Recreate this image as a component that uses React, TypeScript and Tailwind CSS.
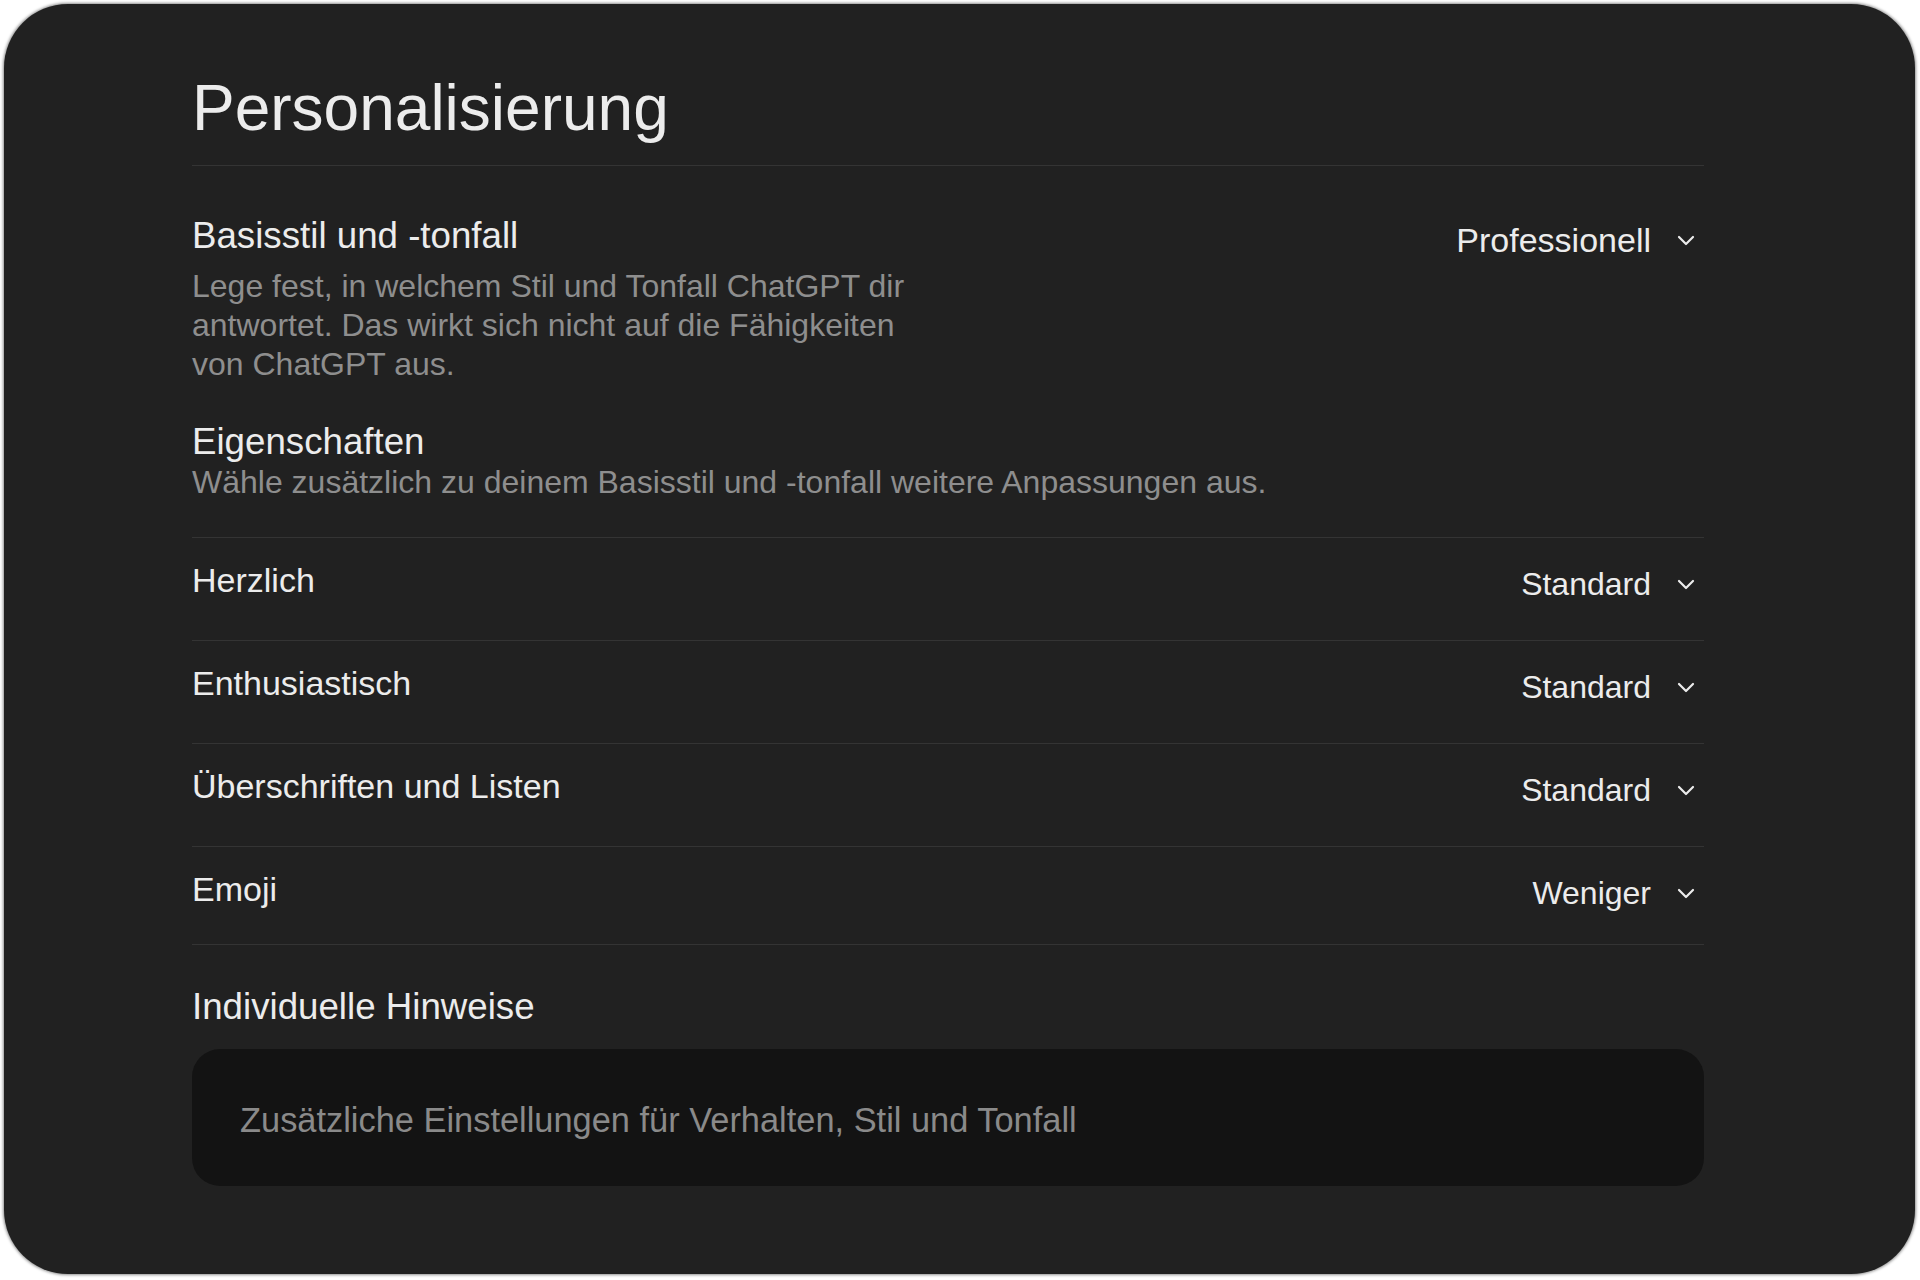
import React from "react";

type Option = { label: string; value: string };

const traits: Option[] = [
  { label: "Herzlich", value: "Standard" },
  { label: "Enthusiastisch", value: "Standard" },
  { label: "Überschriften und Listen", value: "Standard" },
  { label: "Emoji", value: "Weniger" },
];

function Chevron() {
  return (
    <svg width="18" height="11" viewBox="0 0 18 11" fill="none" className="shrink-0">
      <path d="M2 2 L9 9 L16 2" stroke="#ececec" strokeWidth="2.2" strokeLinecap="round" strokeLinejoin="round" />
    </svg>
  );
}

function Dropdown({ value, big }: { value: string; big?: boolean }) {
  return (
    <button
      type="button"
      className={`flex items-center h-[44px] pr-[9px] text-[#ececec] ${big ? "text-[34px]" : "text-[32px]"}`}
    >
      <span>{value}</span>
      <span className="ml-[26px] flex items-center">
        <Chevron />
      </span>
    </button>
  );
}

export default function App() {
  return (
    <div
      className="w-[1920px] h-[1280px] bg-white pt-[4px] pl-[4px] pr-[5px] pb-[6px]"
      style={{ fontFamily: '"Liberation Sans", Arial, Helvetica, sans-serif' }}
    >
      <div className="h-full w-full rounded-[64px] bg-[#212121] shadow-[0_0_3px_1px_rgba(0,0,0,0.45)] pl-[188px] pt-[66px]">
        <div className="w-[1512px] flex flex-col">
          <h1 className="text-[64px] leading-[77px] text-[#ececec] pb-[18px] border-b border-[#343434]">
            Personalisierung
          </h1>

          {/* Basisstil */}
          <div className="flex items-start justify-between mt-[48px]">
            <div className="flex flex-col">
              <h2 className="text-[36.7px] leading-[44px] text-[#ececec]">Basisstil und -tonfall</h2>
              <p className="max-w-[740px] mt-[9px] text-[32px] leading-[39px] text-[#8e8e8e]">
                Lege fest, in welchem Stil und Tonfall ChatGPT dir antwortet. Das wirkt sich nicht auf die
                Fähigkeiten von ChatGPT aus.
              </p>
            </div>
            <div className="mt-[4px]">
              <Dropdown value="Professionell" big />
            </div>
          </div>

          {/* Eigenschaften */}
          <div className="flex flex-col mt-[37px] pb-[35px]">
            <h2 className="text-[36.7px] leading-[42px] text-[#ececec]">Eigenschaften</h2>
            <p className="text-[32px] leading-[39px] text-[#8e8e8e]">
              Wähle zusätzlich zu deinem Basisstil und -tonfall weitere Anpassungen aus.
            </p>
          </div>

          {traits.map((t, i) => (
            <div
              key={t.label}
              className={`flex items-start justify-between border-t border-[#343434] pt-[20px] ${
                i === traits.length - 1 ? "h-[99px] border-b" : "h-[103px]"
              }`}
            >
              <span className="text-[34px] leading-[44px] text-[#ececec]">{t.label}</span>
              <div className="mt-[4px]">
                <Dropdown value={t.value} />
              </div>
            </div>
          ))}

          {/* Individuelle Hinweise */}
          <h2 className="mt-[40px] text-[36.7px] leading-[44px] text-[#ececec]">Individuelle Hinweise</h2>
          <div className="mt-[20px] h-[137px] rounded-[28px] bg-[#131313] flex items-center pl-[48px] pt-[6px]">
            <span className="text-[34.4px] text-[#8a8a8a]">
              Zusätzliche Einstellungen für Verhalten, Stil und Tonfall
            </span>
          </div>
        </div>
      </div>
    </div>
  );
}
